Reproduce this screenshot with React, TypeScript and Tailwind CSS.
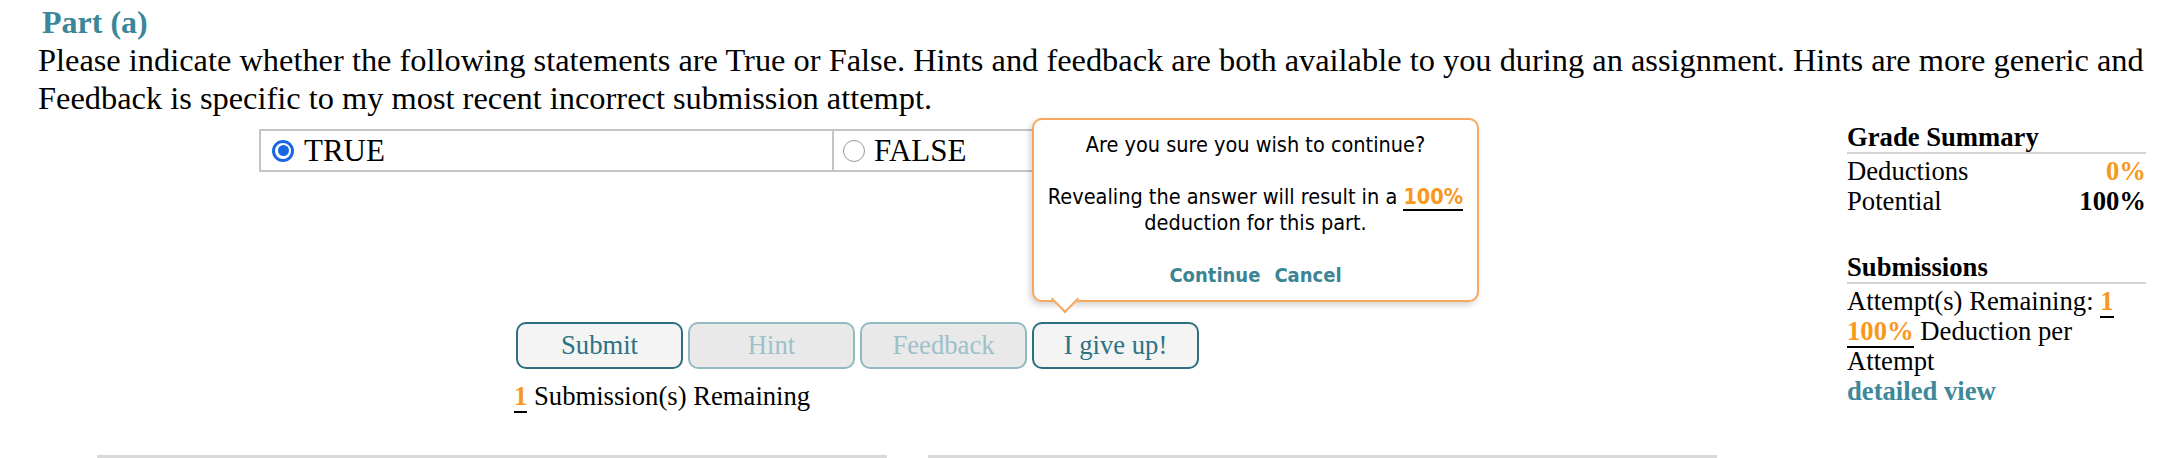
function Radio({ checked }: { checked?: boolean }) {
  if (checked) {
    return (
      <span className="flex h-[22px] w-[22px] shrink-0 items-center justify-center rounded-full border-[3px] border-[#1a67e3] bg-white">
        <span className="h-[11px] w-[11px] rounded-full bg-[#1a67e3]" />
      </span>
    );
  }
  return <span className="h-[22px] w-[22px] shrink-0 rounded-full border-[1.5px] border-[#9a9aa0] bg-white" />;
}

function ActionButton({ label, disabled }: { label: string; disabled?: boolean }) {
  return (
    <button
      className={
        disabled
          ? "h-[47px] w-[167px] rounded-[10px] border-2 border-[#93b9c2] bg-[#e9e9e9] text-[26.67px] leading-none text-[#9ec0c8]"
          : "h-[47px] w-[167px] rounded-[10px] border-2 border-[#2c6f80] bg-[#f4f4f4] text-[26.67px] leading-none text-[#2d7283]"
      }
    >
      {label}
    </button>
  );
}

function Num({ children }: { children: React.ReactNode }) {
  return <span className="border-b-2 border-black font-bold text-[#f8981d]">{children}</span>;
}

export default function App() {
  return (
    <div className="relative h-[458px] w-[2162px] overflow-hidden bg-white font-['Liberation_Serif',serif] text-black">
      <h2 className="ml-[42px] pt-[4px] text-[32px] leading-[36px] font-bold text-[#3b8799]">Part (a)</h2>
      <p className="mt-[1px] ml-[38px] w-[2124px] text-[32.4px] leading-[38px]">
        Please indicate whether the following statements are True or False. Hints and feedback are both available to you
        during an assignment. Hints are more generic and Feedback is specific to my most recent incorrect submission attempt.
      </p>

      <div className="mt-[5px] flex">
        {/* question area */}
        <div className="w-[1847px]">
          <div className="mt-[7px] ml-[259px] flex h-[43px] w-[1146px] border-2 border-[#c5c5c5] text-[31px]">
            <label className="flex flex-1 items-center gap-[10px] border-r-2 border-[#c5c5c5] pl-[11px]">
              <Radio checked />
              <span className="leading-none">TRUE</span>
            </label>
            <label className="flex flex-1 items-center gap-[9px] pl-[9px]">
              <Radio />
              <span className="leading-none">FALSE</span>
            </label>
          </div>

          <div className="mt-[150px] ml-[516px] flex gap-[5px]">
            <ActionButton label="Submit" />
            <ActionButton label="Hint" disabled />
            <ActionButton label="Feedback" disabled />
            <ActionButton label="I give up!" />
          </div>

          <div className="mt-[12px] ml-[514px] text-[26.67px] leading-[30px]">
            <Num>1</Num> Submission(s) Remaining
          </div>

          <div className="mt-[44px] ml-[97px] flex gap-[41px]">
            <div className="h-[6px] w-[790px] bg-[#d9d9d9]" />
            <div className="h-[6px] w-[789px] bg-[#d9d9d9]" />
          </div>
        </div>

        {/* grade summary */}
        <div className="w-[299px] text-[26.67px] leading-[30px]">
          <div className="border-b-2 border-[#d4d4d4] font-bold">Grade Summary</div>
          <div className="mt-[2px] flex justify-between">
            <span>Deductions</span>
            <span className="font-bold text-[#f8981d]">0%</span>
          </div>
          <div className="flex justify-between">
            <span>Potential</span>
            <span className="font-bold">100%</span>
          </div>
          <div className="mt-[36px] border-b-2 border-[#d4d4d4] font-bold">Submissions</div>
          <div className="mt-[2px]">
            Attempt(s) Remaining: <Num>1</Num> <Num>100%</Num> Deduction per Attempt
          </div>
          <div className="font-bold text-[#3d889a]">detailed view</div>
        </div>
      </div>

      {/* confirm popover */}
      <div className="absolute top-[118px] left-[1032px] h-[184px] w-[447px] rounded-[10px] border-2 border-[#f6a85e] bg-white shadow-[-2px_3px_6px_rgba(0,0,0,0.18)]">
        <div className="pt-[12px] text-center font-['DejaVu_Sans_Condensed','DejaVu_Sans',sans-serif] text-[21.5px] leading-[26px] font-stretch-condensed">
          Are you sure you wish to continue?
          <br />
          <br />
          Revealing the answer will result in a <Num>100%</Num>
          <br />
          deduction for this part.
          <br />
          <br />
          <span className="text-[20px] font-bold text-[#3c8494]">Continue</span>
          <span className="ml-[14px] text-[20px] font-bold text-[#3c8494]">Cancel</span>
        </div>
        <div className="absolute bottom-[-9px] left-[21px] h-[20px] w-[20px] rotate-45 border-r-2 border-b-2 border-[#f6a85e] bg-white" />
      </div>
    </div>
  );
}
